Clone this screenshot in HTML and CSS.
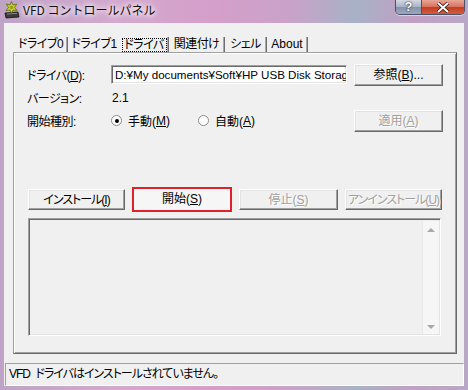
FILE: index.html
```html
<!DOCTYPE html>
<html lang="ja">
<head>
    <meta charset="UTF-8">
    <title>VFD コントロールパネル</title>
    <link rel="stylesheet" href="styles.css">
</head>
<body>

<div class="window">
    <div class="titlebar">
        <svg class="app-icon" width="18" height="18" viewBox="0 0 18 18">
            <path d="M2 12 L15 11 L16 16 L3 17 Z" fill="#3a3a3a" stroke="#111" stroke-width="0.8"/>
            <path d="M4 13 L14 12.4" stroke="#888" stroke-width="1"/>
            <g transform="translate(8.5 6.5)">
                <path d="M0 -6 L1.5 -2.5 L5.2 -3.5 L3 0 L5.5 3 L1.5 2.6 L0 6 L-1.5 2.6 L-5.5 3 L-3 0 L-5.2 -3.5 L-1.5 -2.5 Z" fill="#d8d020" stroke="#5a6a10" stroke-width="0.8"/>
                <circle r="1.8" fill="#8aa818"/>
            </g>
        </svg>
        <span class="title">VFD コントロールパネル</span>
        <div class="caption-btns">
            <span class="cap-btn help">?</span>
            <span class="cap-btn close">
                <svg width="14" height="11" viewBox="0 0 14 11">
                    <path d="M2 1 L12 10 M12 1 L2 10" stroke="#3a1810" stroke-width="3.6"/>
                    <path d="M2 1 L12 10 M12 1 L2 10" stroke="#fff" stroke-width="2"/>
                </svg>
            </span>
        </div>
    </div>

    <div class="client">
        <div class="tabs">
            <span class="tab t1">ドライブ0</span>
            <span class="tab t2 no-sep">ドライブ1</span>
            <span class="tab t3 active"><span class="focus">ドライバ</span></span>
            <span class="tab t4">関連付け</span>
            <span class="tab t5">シェル</span>
            <span class="tab t6">About</span>
        </div>

        <div class="panel">
            <div class="row">
                <span class="label">ドライバ(<u>D</u>):</span>
                <div class="textbox">D:¥My documents¥Soft¥HP USB Disk Storage</div>
                <button class="btn side">参照(<u>B</u>)...</button>
            </div>
            <div class="row">
                <span class="label">バージョン:</span>
                <span class="value">2.1</span>
            </div>
            <div class="row">
                <span class="label">開始種別:</span>
                <span class="option first"><span class="radio checked"></span>手動(<u>M</u>)</span>
                <span class="option"><span class="radio"></span>自動(<u>A</u>)</span>
                <button class="btn side disabled">適用(<u>A</u>)</button>
            </div>

            <div class="actions">
                <button class="btn act tight w1">インストール(<u>I</u>)</button>
                <div class="highlight"><button class="btn act plain">開始(<u>S</u>)</button></div>
                <button class="btn act w3 disabled">停止(<u>S</u>)</button>
                <button class="btn act tight w4 disabled">アンインストール(<u>U</u>)</button>
            </div>

            <div class="listbox">
                <div class="list-body"></div>
                <div class="scrollbar">
                    <span class="arrow up"></span>
                    <span class="arrow down"></span>
                </div>
            </div>
        </div>

        <div class="statusbar">VFD ドライバはインストールされていません。</div>
    </div>
</div>

</body>
</html>
```

FILE: styles.css
```css
/* ウィンドウ全体 */
* {
    box-sizing: border-box;
    margin: 0;
    padding: 0;
}

body {
    font-family: 'Liberation Sans', 'Noto Sans CJK JP', sans-serif;
    font-size: 12px;
    font-feature-settings: "palt";
    color: #000;
    background: #fff;
}

.window {
    width: 468px;
    height: 390px;
    display: flex;
    flex-direction: column;
    background: linear-gradient(to right, #bfa3c6 0%, #d3a9cf 25%, #d59fca 45%, #c9a2c9 62%, #a8b2c6 76%, #c29fc4 88%, #b9a8c8 100%);
    overflow: hidden;
}

/* タイトルバー */
.titlebar {
    height: 23px;
    display: flex;
    align-items: flex-start;
    padding-left: 3px;
}

.app-icon {
    margin-top: 1px;
}

.title {
    margin-left: 2px;
    margin-top: 2px;
    line-height: 16px;
    font-family: 'Noto Sans CJK JP', sans-serif;
    font-feature-settings: normal;
    color: #111;
    text-shadow: 0 0 4px #fff, 0 0 6px #fff, 0 0 8px #f4eaf4;
}

.caption-btns {
    margin-left: auto;
    margin-right: 3px;
    display: flex;
    height: 15px;
    border: 1px solid #4a5068;
    border-top: none;
    border-radius: 0 0 5px 5px;
    overflow: hidden;
    box-shadow: 0 1px 0 rgba(255, 255, 255, 0.5);
}

.cap-btn {
    display: flex;
    align-items: center;
    justify-content: center;
    height: 14px;
    color: #fff;
    font-weight: bold;
    font-size: 13px;
    line-height: 14px;
}

.help {
    width: 26px;
    background: linear-gradient(#d4d8e2, #a9b3c6 50%, #8592ab 51%, #9aa8c0);
    border-right: 1px solid #4a5068;
    text-shadow: 0 0 2px #334, 0 0 1px #223;
}

.close {
    width: 42px;
    background: linear-gradient(#e9a797, #d7705c 50%, #c23c22 51%, #d65b3b);
}

/* クライアント領域 */
.client {
    flex: 1;
    margin: 0 4px 4px 4px;
    background: #f0f0f0;
    display: flex;
    flex-direction: column;
    padding-top: 14px;
}

.tabs {
    display: flex;
    height: 15px;
    margin-left: 10px;
    line-height: 15px;
    letter-spacing: -0.5px;
}

.tab {
    text-align: center;
    white-space: nowrap;
    border-right: 1px solid #6e6e6e;
    box-shadow: inset -1px 0 0 #a8a8a8;
}

.tab.no-sep {
    border-right: none;
    box-shadow: none;
}

.t1 { width: 54px; }
.t2 { width: 52px; }
.t3 { width: 49px; }
.t4 { width: 56px; }
.t5 { width: 42px; }
.t6 { width: 41px; letter-spacing: 0; }

.tab.active {
    display: flex;
    justify-content: center;
    align-items: center;
}

.focus {
    display: block;
    width: 45px;
    height: 14px;
    line-height: 12px;
    border: 1px dotted #000;
}

.panel {
    height: 302px;
    margin-left: 9px;
    margin-right: 7px;
    border: 1px solid #a0a0a0;
    border-right-color: #696969;
    border-bottom-color: #696969;
    box-shadow: inset 1px 1px 0 #fff, inset -1px -1px 0 #a0a0a0;
    padding: 10px 13px 0 13px;
}

.row {
    display: flex;
    align-items: center;
    height: 23px;
}

.label {
    width: 84px;
    white-space: nowrap;
    letter-spacing: -0.5px;
}

.textbox {
    width: 236px;
    height: 19px;
    margin-right: 6px;
    background: #fff;
    border: 1px solid #a0a0a0;
    border-right-color: #fff;
    border-bottom-color: #fff;
    box-shadow: inset 1px 1px 0 #696969, inset -1px -1px 0 #e3e3e3;
    padding: 2px 3px;
    font-size: 11.6px;
    line-height: 14px;
    white-space: nowrap;
    overflow: hidden;
}

.value {
    padding-left: 1px;
}

.option {
    display: flex;
    align-items: center;
    white-space: nowrap;
}

.option.first {
    width: 87px;
}

.radio {
    width: 11px;
    height: 11px;
    margin-right: 6px;
    border-radius: 50%;
    background: #fff;
    border: 1px solid #8a8a8a;
    display: flex;
    align-items: center;
    justify-content: center;
}

.radio.checked::after {
    content: "";
    width: 4px;
    height: 4px;
    border-radius: 50%;
    background: #000;
}

/* ボタン */
.btn {
    font: inherit;
    font-feature-settings: "palt";
    background: #f0f0f0;
    color: #000;
    border: 1px solid #fff;
    border-right-color: #696969;
    border-bottom-color: #696969;
    box-shadow: inset -1px -1px 0 #a0a0a0, inset 1px 1px 0 #e3e3e3;
    height: 22px;
    line-height: 18px;
    white-space: nowrap;
}

.btn.side {
    width: 89px;
    margin-left: auto;
}

.btn.disabled {
    color: #a0a0a0;
    text-shadow: 1px 1px 0 #fff;
}

.actions {
    display: flex;
    align-items: center;
    gap: 7px;
    height: 25px;
    margin-top: 55px;
    margin-left: 1px;
}

.btn.act {
    height: 21px;
    padding: 0;
}

.btn.tight {
    letter-spacing: -1px;
}

.w1 { width: 97px; }
.w3 { width: 99px; }
.w4 { width: 97px; }

.highlight {
    width: 100px;
    height: 25px;
    border: 2px solid #e0202c;
    box-shadow: inset 0 0 0 1px #ee6a70;
}

.btn.plain {
    width: 100%;
    height: 100%;
    border: none;
    box-shadow: none;
    background: #f6f6f6;
    line-height: 19px;
}

/* リストボックス */
.listbox {
    width: 413px;
    height: 118px;
    margin-top: 6px;
    margin-left: 1px;
    display: flex;
    border: 1px solid #a0a0a0;
    border-right-color: #fff;
    border-bottom-color: #fff;
    box-shadow: inset 1px 1px 0 #696969, inset -1px -1px 0 #e3e3e3;
    padding: 2px 1px 1px 2px;
}

.list-body {
    flex: 1;
}

.scrollbar {
    width: 17px;
    display: flex;
    flex-direction: column;
    justify-content: space-between;
    align-items: center;
    background: #f6f6f6;
    border-left: 1px solid #e8e8e8;
    padding: 7px 0 5px;
}

.arrow {
    width: 0;
    height: 0;
    border-left: 4px solid transparent;
    border-right: 4px solid transparent;
}

.arrow.up {
    border-bottom: 4px solid #a8a8a8;
}

.arrow.down {
    border-top: 4px solid #a8a8a8;
}

/* ステータスバー */
.statusbar {
    height: 23px;
    margin-top: 9px;
    margin-left: 1px;
    border: 1px solid #a0a0a0;
    border-right-color: #fff;
    border-bottom-color: #fff;
    padding-left: 3px;
    line-height: 21px;
    white-space: nowrap;
    letter-spacing: -1px;
    word-spacing: 3px;
}
```
